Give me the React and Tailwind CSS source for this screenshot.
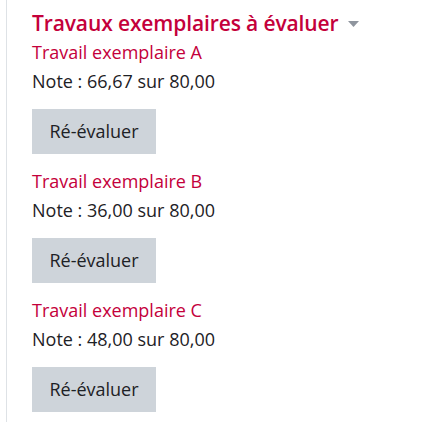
export default function App() {
  const items = [
    { name: "Travail exemplaire A", grade: "66,67" },
    { name: "Travail exemplaire B", grade: "36,00" },
    { name: "Travail exemplaire C", grade: "48,00" },
  ];

  return (
    <div className="min-h-screen bg-white font-['Open_Sans',sans-serif]">
      <div className="ml-[6px] h-[422px] border-l border-[#dee2e6] pl-[25px] pt-[9px]">
        {/* Header */}
        <h3 className="flex items-center text-[21px] leading-[28px] font-semibold tracking-[-0.12px] text-[#c4003b]">
          Travaux exemplaires à évaluer
          <svg width="11" height="6" viewBox="0 0 11 6" className="ml-[9px] mt-[2px]">
            <path d="M0 0 L11 0 L5.5 6 Z" fill="#8f959e" />
          </svg>
        </h3>

        <div className="mt-[1px]">
          {items.map((item) => (
            <div key={item.name}>
              <div className="text-[18px] leading-[29px] text-[#c4003b]">
                {item.name}
              </div>
              <div className="text-[18px] leading-[29px] text-[#1d2125]">
                Note : {item.grade} sur 80,00
              </div>
              <button
                type="button"
                className="mt-[13px] mb-[13px] h-[45px] w-[124px] bg-[#ced4da] text-[18px] text-[#1d2125]"
              >
                Ré-évaluer
              </button>
            </div>
          ))}
        </div>
      </div>
    </div>
  );
}
